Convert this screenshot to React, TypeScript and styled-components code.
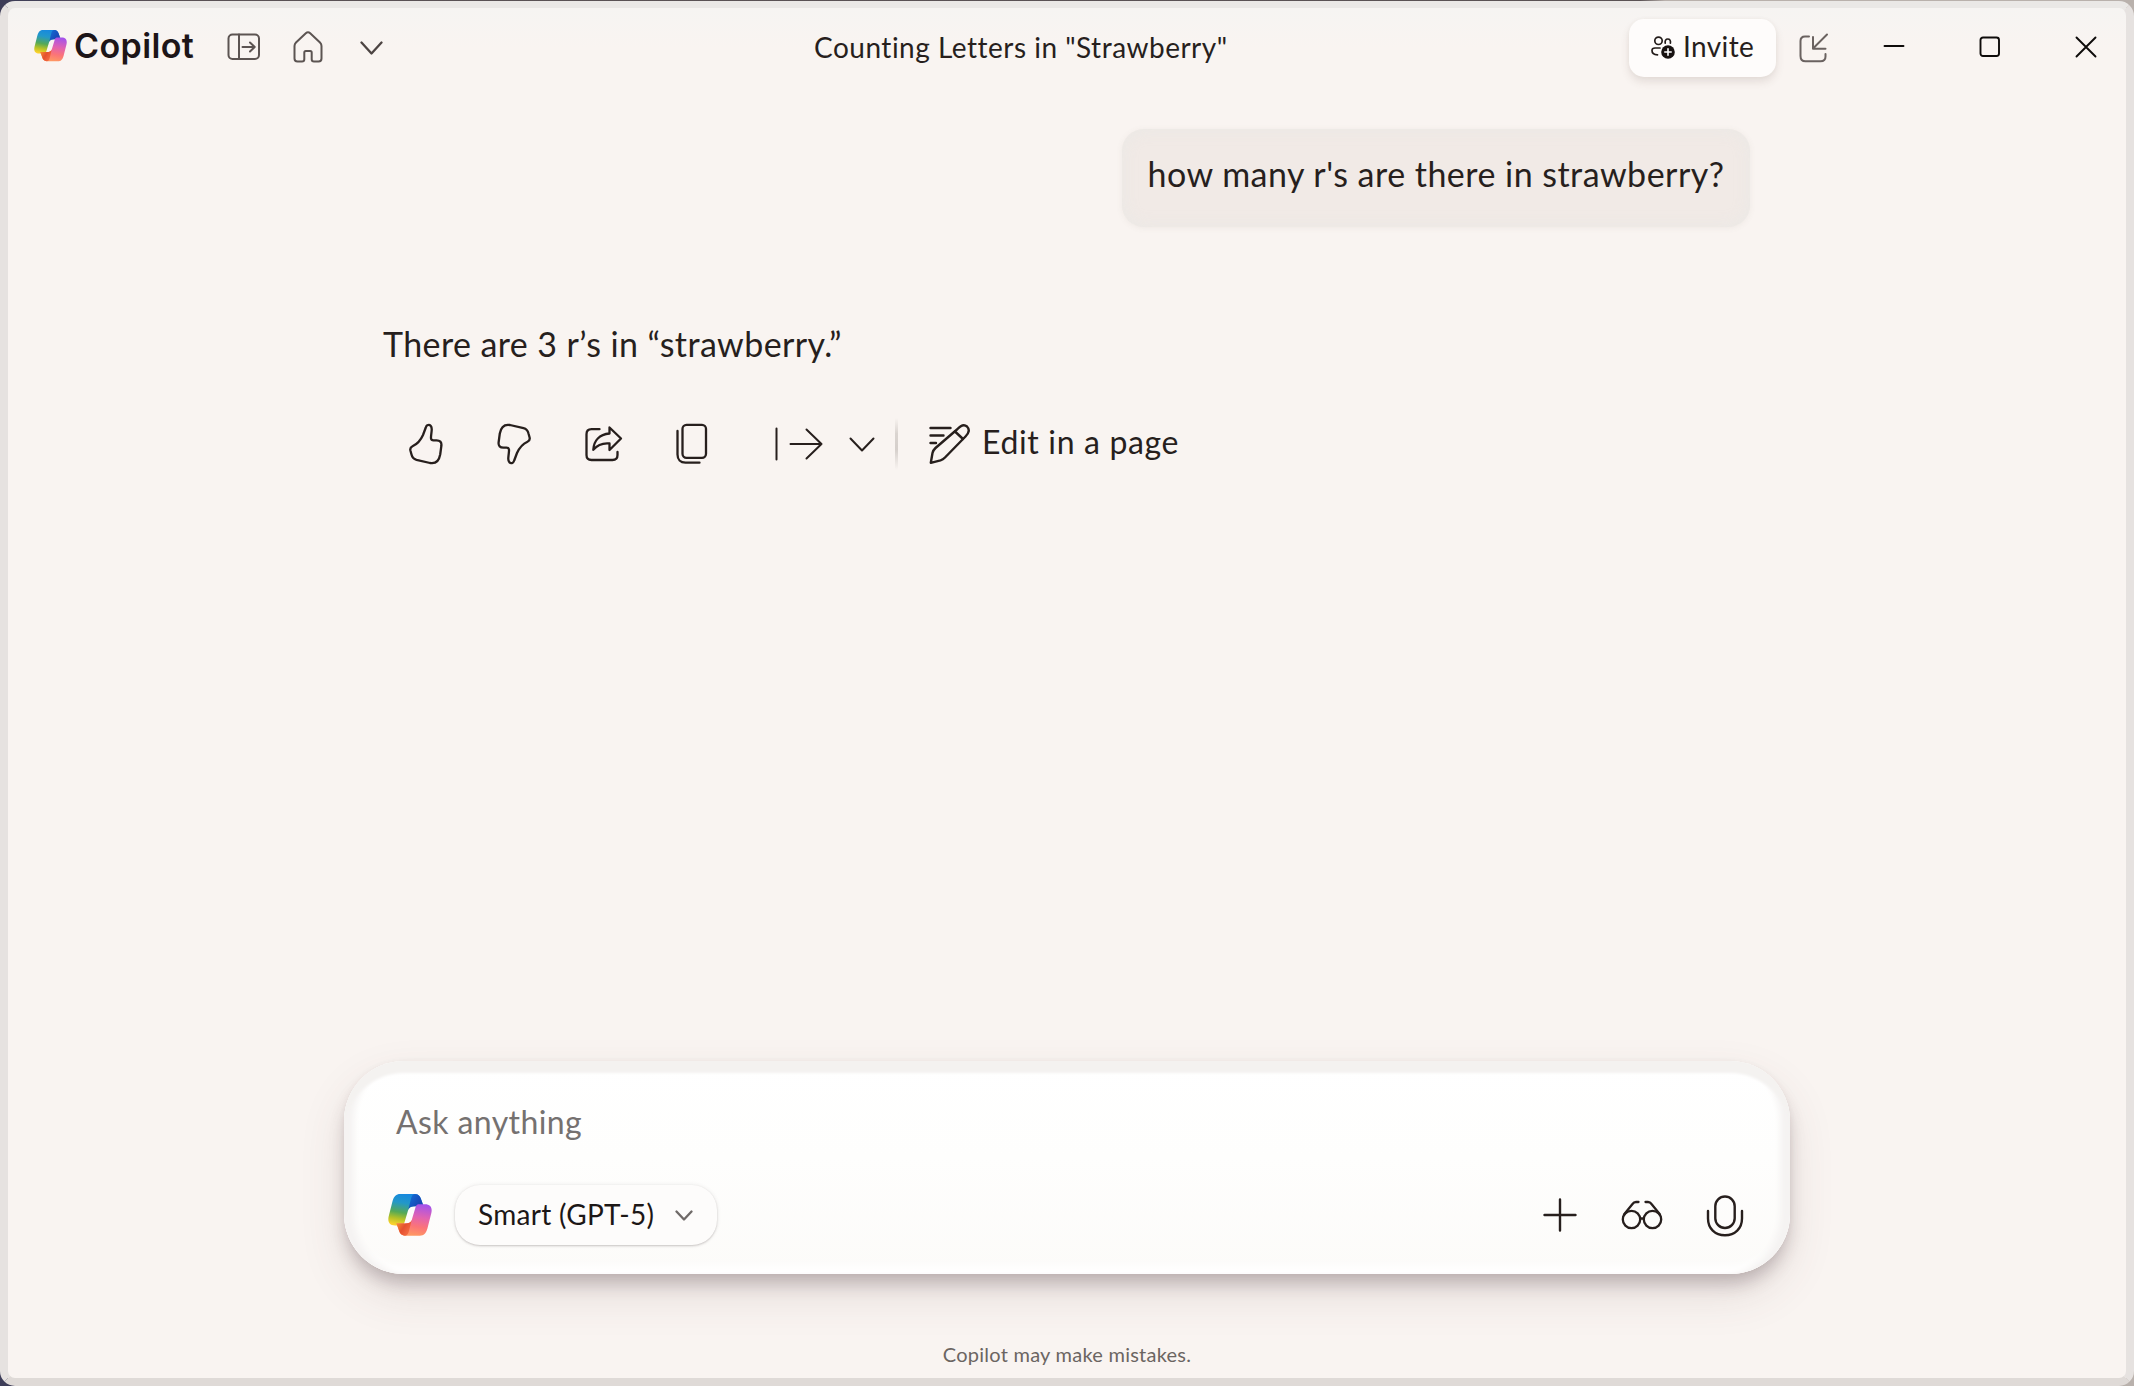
import React from "react";
import styled, { createGlobalStyle } from "styled-components";

const GlobalStyle = createGlobalStyle`
  * { box-sizing: border-box; }
  html, body { margin: 0; padding: 0; }
  body {
    background: #4a4648;
    font-family: Lato, "Noto Sans", sans-serif;
    color: #271f1d;
    overflow: hidden;
  }
  button { font: inherit; color: inherit; border: 0; background: none; padding: 0; margin: 0; }
  h1 { margin: 0; }
`;

const Backdrop = styled.div`
  width: 2134px;
  height: 1386px;
  padding-top: 1px;
  background: linear-gradient(90deg, #3d3d58 0, #595155 160px, #5a5254 1640px, #b9b1ac 1665px, #b9b1ac 100%);
`;

const Window = styled.div`
  display: flex;
  flex-direction: column;
  width: 2134px;
  height: 1385px;
  border: 8px solid #e6e2e0;
  border-top: 7px solid #eae8e6;
  border-bottom-color: #dfdad7;
  border-radius: 15px;
  background: linear-gradient(180deg, #f6f4f2 0, #f9f4f1 40px, #f9f4f1 100%);
`;

const TitleBar = styled.header`
  display: flex;
  align-items: center;
  height: 78px;
  padding-left: 26px;
`;

const BarLeft = styled.div`
  display: flex;
  align-items: center;
  width: 780px;
`;

const Brand = styled.div`
  display: flex;
  align-items: center;
  gap: 7px;
  width: 193px;
  padding-bottom: 2px;
`;

const Wordmark = styled.span`
  font-family: Inter, Lato, sans-serif;
  font-size: 34px;
  font-weight: 600;
  line-height: 40px;
  letter-spacing: 0.4px;
  color: #1d1518;
`;

const Label = styled.span<{ $size: number; $track?: number; $color?: string; $lift?: number }>`
  padding-bottom: ${(p) => p.$lift ?? 0}px;
  font-size: ${(p) => p.$size}px;
  font-weight: 400;
  line-height: 1.25;
  letter-spacing: ${(p) => p.$track ?? 0}px;
  color: ${(p) => p.$color ?? "#271f1d"};
  white-space: nowrap;
`;

const TitleSlot = styled.div`
  display: flex;
  flex: 1;
`;

const BarRight = styled.div`
  display: flex;
  align-items: center;
  padding-right: 29px;
`;

const InviteButton = styled.button`
  display: flex;
  align-items: center;
  gap: 8px;
  width: 147px;
  height: 58px;
  padding-left: 22px;
  margin: 1px 23px 0 0;
  border-radius: 15px;
  background: #fefcfb;
  box-shadow: 0 5px 8px rgba(90, 70, 60, 0.13), 0 0 4px rgba(90, 70, 60, 0.04);
`;

const IconButton = styled.button<{ $after?: number; $drop?: number }>`
  display: flex;
  flex: none;
  margin-right: ${(p) => p.$after ?? 0}px;
  padding-top: ${(p) => p.$drop ?? 0}px;
`;

const Conversation = styled.main`
  display: flex;
  flex-direction: column;
  flex: 1;
  padding: 43px 376px 0 375px;
`;

const UserBubble = styled.div`
  align-self: flex-end;
  display: flex;
  justify-content: center;
  align-items: center;
  width: 628px;
  height: 98px;
  padding-bottom: 7px;
  border-radius: 22px;
  background: #f1eae6;
  box-shadow: inset 0 0 16px rgba(232, 232, 230, 0.8), 0 1px 6px rgba(120, 100, 90, 0.08);
`;

const Answer = styled.p`
  display: flex;
  height: 43px;
  margin: 96px 0 0;
`;

const ActionRow = styled.div`
  display: flex;
  align-items: center;
  height: 50px;
  margin-top: 53px;
  padding-left: 25px;
`;

const Divider = styled.span`
  width: 3px;
  height: 52px;
  margin-right: 31px;
  background: linear-gradient(180deg, rgba(215, 209, 205, 0), #dad4d0 30%, #d5cfcb 60%, rgba(215, 209, 205, 0));
`;

const EditButton = styled.button`
  display: flex;
  align-items: center;
  gap: 11px;
`;

const Composer = styled.section`
  display: flex;
  flex-direction: column;
  width: 1446px;
  height: 213px;
  margin: 0 auto;
  padding: 41px 46px 0 44px;
  border-radius: 60px;
  background: linear-gradient(180deg, #ffffff 0, #fefefd 45%, #fcfbf9 100%);
  box-shadow:
    inset 0 13px 3px -1px #f4f2f0,
    inset 13px 0 6px -3px #f5f3f2,
    inset -13px 0 6px -3px #f5f3f2,
    inset 0 -8px 10px #ffffff,
    0 12px 16px -2px rgba(70, 50, 60, 0.25),
    0 20px 46px rgba(90, 60, 60, 0.13),
    0 0 6px rgba(90, 60, 60, 0.04);
`;

const Prompt = styled.div`
  display: flex;
  height: 40px;
  padding-left: 8px;
`;

const Tools = styled.div`
  display: flex;
  align-items: center;
  height: 62px;
  margin-top: 42px;
`;

const ModelPicker = styled.button`
  display: flex;
  align-items: center;
  gap: 21px;
  width: 262px;
  height: 60px;
  margin-left: 23px;
  padding-left: 23px;
  border-radius: 25px;
  background: #fdfcfb;
  box-shadow: 0 1px 2px rgba(70, 60, 60, 0.24), 0 0 4px rgba(70, 60, 60, 0.1);
`;

const Spacer = styled.span`
  flex: 1;
`;

const Footer = styled.footer`
  display: flex;
  justify-content: center;
  height: 104px;
  padding-top: 68px;
`;

type StrokeProps = { w: number; h: number; sw?: number; color?: string; children: React.ReactNode };

const Stroke = ({ w, h, sw = 2.3, color = "#271f1d", children }: StrokeProps) => (
  <svg width={w} height={h} viewBox={`0 0 ${w} ${h}`} fill="none" stroke={color} strokeWidth={sw} strokeLinecap="round" strokeLinejoin="round">
    {children}
  </svg>
);

const ribbon =
  "M12 0H26.500C30.500 0 32 3 33 6.500L35 12H27C22.300 12 20.600 13 19.500 17L16.200 28C15.400 30.500 14.500 31 12 31H7C1 31-.5 27 .7 22L4.500 7C6 2 8 0 12 0Z";
const fold = "M26.500 0C30.500 0 32 3 33 6.500L35 12H27C23 12 21 13 19.900 15.500L22.300 6C23.200 2 24 0 26.500 0Z";

const CopilotMark = ({ width, id }: { width: number; id: string }) => (
  <svg width={width} height={(width * 41) / 43.3} viewBox="0 0 43.3 41">
    <defs>
      <linearGradient id={`${id}-cool`} x1="0.55" y1="0" x2="0.35" y2="1">
        <stop offset="0" stopColor="#1688e0" />
        <stop offset="0.3" stopColor="#2398c8" />
        <stop offset="0.6" stopColor="#55a956" />
        <stop offset="0.8" stopColor="#b4c127" />
        <stop offset="1" stopColor="#fcd22c" />
      </linearGradient>
      <linearGradient id={`${id}-navy`} x1="0" y1="0" x2="1" y2="0.7">
        <stop offset="0" stopColor="#1272d8" />
        <stop offset="0.6" stopColor="#1650bd" />
        <stop offset="1" stopColor="#1d3fae" />
      </linearGradient>
      <linearGradient id={`${id}-warm`} x1="0.55" y1="0" x2="0.35" y2="1">
        <stop offset="0" stopColor="#ff9a62" />
        <stop offset="0.3" stopColor="#fb7478" />
        <stop offset="0.6" stopColor="#e263b0" />
        <stop offset="1" stopColor="#a553ea" />
      </linearGradient>
      <linearGradient id={`${id}-red`} x1="0" y1="0" x2="1" y2="0.7">
        <stop offset="0" stopColor="#fb7b4c" />
        <stop offset="0.6" stopColor="#e5502f" />
        <stop offset="1" stopColor="#f4892f" />
      </linearGradient>
    </defs>
    <path d={ribbon} fill={`url(#${id}-cool)`} />
    <path d={fold} fill={`url(#${id}-navy)`} />
    <g transform="rotate(180 21.65 20.5)">
      <path d={ribbon} fill={`url(#${id}-warm)`} />
      <path d={fold} fill={`url(#${id}-red)`} />
    </g>
  </svg>
);

const PanelIcon = () => (
  <Stroke w={34} h={28} sw={2} color="#5c5452">
    <rect x="1.500" y="1.500" width="30.500" height="24.500" rx="4" />
    <path d="M12 1.500V26M15.500 14H27.500M23 9.500L27.700 14L23 18.500" />
  </Stroke>
);

const HomeIcon = () => (
  <Stroke w={30} h={32} sw={2} color="#5c5452">
    <path d="M12.800 2.300C14.200 1 15.800 1 17.200 2.300L27 11.500C28 12.500 28.500 13.500 28.500 15V27.500C28.500 29.500 27.500 30.500 25.500 30.500H21C19.500 30.500 18.700 29.700 18.700 28.200V21.500C18.700 20.500 18.200 20 17.200 20H12.800C11.800 20 11.300 20.500 11.300 21.500V28.200C11.300 29.700 10.500 30.500 9 30.500H4.500C2.500 30.500 1.500 29.500 1.500 27.500V15C1.500 13.500 2 12.500 3 11.500Z" />
  </Stroke>
);

const InviteIcon = () => (
  <svg width="24" height="24" viewBox="0 0 24 24" fill="none" stroke="#231c1a" strokeWidth="1.700" strokeLinecap="round">
    <circle cx="7.500" cy="4.800" r="3.700" />
    <path d="M14.200 7.200C13.800 4.500 14.800 3 16.800 3S19.800 4.500 19.400 7.200" />
    <path d="M9 12H4C2 12 1 13 1 14.500C1 17 3 18.800 6.500 18.800" />
    <circle cx="17" cy="16" r="6.800" fill="#181211" stroke="none" />
    <path d="M17 12.800V19.200M13.800 16H20.200" stroke="#fff" strokeWidth="1.600" />
  </svg>
);

const DockIcon = () => (
  <Stroke w={30} h={30} sw={2} color="#6a6260">
    <path d="M10 3.500H6C3 3.500 1.500 5 1.500 8V23C1.500 26.500 3.500 28.300 6.500 28.300H21.500C24.500 28.300 26.500 26.500 26.500 23.500V21" />
    <path d="M28 1.500L14 15.500M14 4V15.800H26.500" />
  </Stroke>
);

const thumb =
  "M19.300 2.200C22 .9 24 3.300 23.700 7C23.500 10.500 22.800 13.500 23 15.300C23.200 16.800 24 17.300 25.500 17.300H28.500C32 17.300 33.700 19 33.400 22.500L32.200 31.500C31 38 27.500 41 22 40L8.500 36.800C5.500 36 4.200 34.500 3.500 31.500L2.400 27.500C1.900 25.300 2.500 24.200 4.500 23.300C9.500 21 13 16.500 15 12L17.800 4.500C18.200 3.300 18.600 2.600 19.300 2.200Z";

const ThumbUp = () => (
  <Stroke w={36} h={42}>
    <path d={thumb} />
  </Stroke>
);

const ThumbDown = () => (
  <Stroke w={36} h={42}>
    <path d={thumb} transform="rotate(180 18 21)" />
  </Stroke>
);

const ShareIcon = () => (
  <Stroke w={38} h={38}>
    <path d="M14.500 4.200H6.500C3.500 4.200 1.500 6.200 1.500 9.200V30C1.500 33 3.500 35 6.500 35H27.500C30.500 35 32.500 33 32.500 30V27" />
    <path d="M24.500 2.500L36 13.500L24.500 25V18.500C17.500 17.800 12.500 19.800 8.300 24.800C8.800 15.500 14.500 9.300 24.500 8.500Z" />
  </Stroke>
);

const CopyIcon = () => (
  <Stroke w={32} h={42}>
    <rect x="6.500" y="1.800" width="23.500" height="33" rx="4" />
    <path d="M1.500 8V31.500C1.500 36.500 4.500 39.700 9.500 39.700H23.500" />
  </Stroke>
);

const ReadIcon = () => (
  <Stroke w={48} h={34} sw={2}>
    <path d="M1.500 1.500V32.500M15.500 17H46.500M31.500 2.500L46.500 17L31.500 31.500" />
  </Stroke>
);

const Chevron = ({ w, h, sw, color }: { w: number; h: number; sw?: number; color?: string }) => (
  <Stroke w={w} h={h} sw={sw} color={color}>
    <path d={`M1.500 1.500L${w / 2} ${h - 1.5}L${w - 1.5} 1.500`} />
  </Stroke>
);

const PencilIcon = () => (
  <Stroke w={42} h={42} sw={2.4}>
    <path d="M28 6.500C32 2 35 1 38 3.500C41 6.500 40 10 36.500 13.500L16 34.500C14.500 36 13.500 36.700 11.500 37.300L1.800 39.800L3.500 30C4 28 4.800 26.500 6.500 25Z" />
    <path d="M26 8.500L34 16M1.500 5H21.500M1.500 12.500H14.500M1.500 20H7" />
  </Stroke>
);

const PlusIcon = () => (
  <Stroke w={34} h={34} sw={2.4}>
    <path d="M17 1.500V32.500M1.500 17H32.500" />
  </Stroke>
);

const GlassesIcon = () => (
  <Stroke w={42} h={30}>
    <circle cx="10.500" cy="19.500" r="8.700" />
    <circle cx="31.500" cy="19.500" r="8.700" />
    <path d="M19.200 18.500H22.800M3 14.500L11.500 4C12.500 2.500 13.500 2 15 2H17.500M39 14.500L30.500 4C29.500 2.500 28.500 2 27 2H24.500" />
  </Stroke>
);

const MicIcon = () => (
  <Stroke w={38} h={42} sw={2.4}>
    <rect x="9.300" y="1.500" width="19.400" height="31.500" rx="9.700" />
    <path d="M2 16V23.500C2 33.500 9 40.300 19 40.300S36 33.500 36 23.500V16" />
  </Stroke>
);

const MinimizeIcon = () => (
  <Stroke w={22} h={22} sw={1.9} color="#0e0b0a">
    <path d="M1.500 10H20.500" />
  </Stroke>
);

const MaximizeIcon = () => (
  <Stroke w={22} h={22} sw={1.9} color="#0e0b0a">
    <rect x="1.500" y="1.500" width="18.500" height="18.500" rx="2.500" />
  </Stroke>
);

const CloseIcon = () => (
  <Stroke w={22} h={22} sw={1.9} color="#0e0b0a">
    <path d="M1.500 1.500L20.500 20.500M20.500 1.500L1.500 20.500" />
  </Stroke>
);

export default function App() {
  return (
    <>
      <GlobalStyle />
      <Backdrop>
        <Window>
          <TitleBar>
            <BarLeft>
              <Brand>
                <CopilotMark width={33} id="brand" />
                <Wordmark>Copilot</Wordmark>
              </Brand>
              <IconButton $after={32}><PanelIcon /></IconButton>
              <IconButton $after={37}><HomeIcon /></IconButton>
              <IconButton $drop={2}><Chevron w={23} h={14} color="#4c4442" /></IconButton>
            </BarLeft>
            <TitleSlot>
              <Label as="h1" $size={28} $track={0.5}>Counting Letters in "Strawberry"</Label>
            </TitleSlot>
            <BarRight>
              <InviteButton>
                <InviteIcon />
                <Label $size={28} $track={0.4} $lift={2}>Invite</Label>
              </InviteButton>
              <IconButton $after={54} $drop={1}><DockIcon /></IconButton>
              <IconButton $after={74}><MinimizeIcon /></IconButton>
              <IconButton $after={74}><MaximizeIcon /></IconButton>
              <IconButton><CloseIcon /></IconButton>
            </BarRight>
          </TitleBar>

          <Conversation>
            <UserBubble>
              <Label $size={34} $track={0.47}>how many r's are there in strawberry?</Label>
            </UserBubble>
            <Answer>
              <Label $size={34} $track={0.4}>There are 3 r’s in “strawberry.”</Label>
            </Answer>
            <ActionRow>
              <IconButton $after={52}><ThumbUp /></IconButton>
              <IconButton $after={53}><ThumbDown /></IconButton>
              <IconButton $after={53}><ShareIcon /></IconButton>
              <IconButton $after={67}><CopyIcon /></IconButton>
              <IconButton $after={26}><ReadIcon /></IconButton>
              <IconButton $after={20}><Chevron w={26} h={15} sw={2} /></IconButton>
              <Divider />
              <EditButton>
                <PencilIcon />
                <Label $size={32} $track={0.65} $lift={4}>Edit in a page</Label>
              </EditButton>
            </ActionRow>
          </Conversation>

          <Composer>
            <Prompt>
              <Label $size={32} $track={0.4} $color="#757170">Ask anything</Label>
            </Prompt>
            <Tools>
              <CopilotMark width={44} id="composer" />
              <ModelPicker>
                <Label $size={28} $track={0.3} $color="#1c1716" $lift={1}>Smart (GPT-5)</Label>
                <Chevron w={18} h={11} color="#6f6a68" />
              </ModelPicker>
              <Spacer />
              <IconButton $after={44}><PlusIcon /></IconButton>
              <IconButton $after={43}><GlassesIcon /></IconButton>
              <IconButton $drop={2}><MicIcon /></IconButton>
            </Tools>
          </Composer>

          <Footer>
            <Label $size={20} $track={0.25} $color="#6b6562">Copilot may make mistakes.</Label>
          </Footer>
        </Window>
      </Backdrop>
    </>
  );
}
